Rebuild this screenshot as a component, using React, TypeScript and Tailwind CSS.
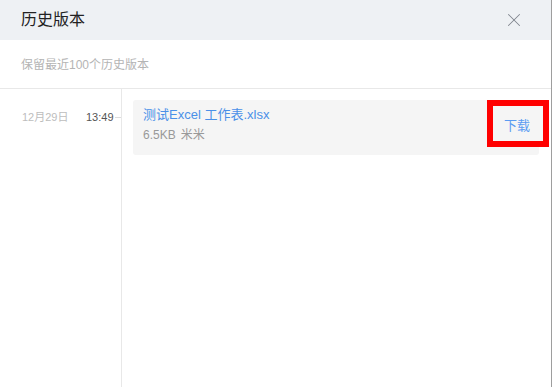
import { X } from 'lucide-react';

const versions = [
  { id: 1, date: '12月29日', time: '13:49', name: '测试Excel 工作表.xlsx', size: '6.5KB', user: '米米' },
];

export default function App() {
  return (
    <div
      className="w-[552px] h-[387px] bg-white border-r border-[#9e9e9e] flex flex-col overflow-hidden"
      style={{ fontFamily: '"Liberation Sans", "Noto Sans CJK SC", sans-serif' }}
    >
      {/* Header */}
      <div className="h-[40px] shrink-0 bg-[#eef1f4] flex items-center justify-between pl-[21px] pr-[26px]">
        <h1 className="text-[16px] text-[#222] leading-none">历史版本</h1>
        <X size={22} strokeWidth={1.1} className="text-[#80868e]" />
      </div>

      {/* Tip */}
      <div className="h-[49px] shrink-0 flex items-center pl-[21px] border-b border-[#e8e8e8]">
        <p className="text-[12px] text-[#b4b4b4] pt-[2px]">保留最近100个历史版本</p>
      </div>

      {/* Body */}
      <div className="flex flex-1">
        <div className="w-[122px] shrink-0 border-r border-[#e8e8e8] pt-[21px]">
          {versions.map((v) => (
            <div key={v.id} className="flex items-center h-[14px] pl-[22px]">
              <span className="text-[11px] text-[#bdbdbd] w-[64px]">{v.date}</span>
              <span className="text-[11px] text-[#555]">{v.time}</span>
              <span className="flex-1 h-px bg-[#dcdcdc] ml-[1px]" />
            </div>
          ))}
        </div>

        <div className="flex-1 pl-[11px] pr-[12px] pt-[11px]">
          {versions.map((v) => (
            <div key={v.id} className="relative h-[55px] bg-[#f5f5f5] rounded-[3px] pl-[10px] pt-[5px]">
              <p className="text-[13px] leading-[20px] text-[#4a90e8]">{v.name}</p>
              <p className="text-[12px] leading-[18px] text-[#999] mt-[1px]">
                {v.size}
                <span className="ml-[5px]">{v.user}</span>
              </p>
              <div className="absolute right-[-10px] top-0 w-[62px] h-[47px] border-[6px] border-[#ff0000] bg-[#f5f5f5] flex items-center justify-center">
                <span className="text-[13px] text-[#5b9cf2] pt-[4px] pr-[2px]">下载</span>
              </div>
            </div>
          ))}
        </div>
      </div>
    </div>
  );
}
